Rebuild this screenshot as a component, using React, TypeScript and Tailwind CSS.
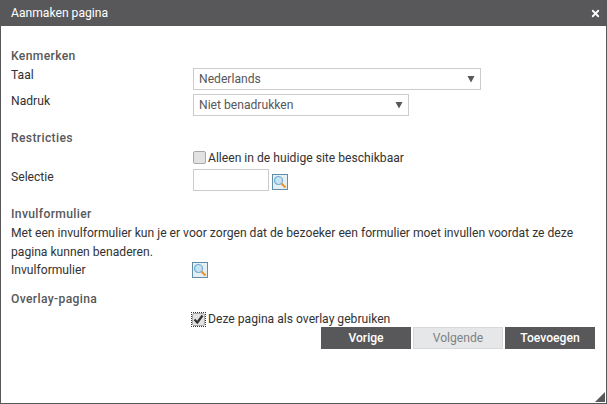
import { X } from "lucide-react";

function SearchIcon() {
  return (
    <span className="flex h-[16px] w-[16px] shrink-0 items-center justify-center border border-[#5f8fa8] bg-[#e4eff6]">
      <svg width="14" height="14" viewBox="0 0 14 14">
        <line x1="8" y1="8" x2="12.5" y2="12.5" stroke="#e8962e" strokeWidth="2.2" />
        <circle cx="5.5" cy="5.5" r="4" fill="#c4e4f5" stroke="#7fa8c4" strokeWidth="1.2" />
      </svg>
    </span>
  );
}

function Select({ value, width }: { value: string; width: string }) {
  return (
    <div className={`flex h-[22px] items-center justify-between border border-[#cccccc] bg-white px-[5px] text-[#58585a] ${width}`}>
      <span className="pt-[1px]">{value}</span>
      <svg width="8" height="8" viewBox="0 0 8 8">
        <path d="M0.5 1h7L4 7.5z" fill="#58585a" />
      </svg>
    </div>
  );
}

function Checkbox({ checked }: { checked?: boolean }) {
  return (
    <span className="flex h-[13px] w-[13px] shrink-0 items-center justify-center rounded-[2px] border border-[#a8a8a8] bg-[#e2e2e2]">
      {checked && (
        <svg width="11" height="11" viewBox="0 0 11 11">
          <path d="M1.5 5.5l2.8 3L9.5 1.5" fill="none" stroke="#333333" strokeWidth="2.2" />
        </svg>
      )}
    </span>
  );
}

function Heading({ children, className }: { children: string; className: string }) {
  return <h2 className={`h-[19px] font-medium tracking-[0.35px] text-[#58585a] ${className}`}>{children}</h2>;
}

export default function App() {
  return (
    <div
      className="flex h-[404px] w-[607px] flex-col overflow-hidden border-x border-b border-[#58585a] bg-white text-[12.13px] leading-[19px] text-[#333333]"
      style={{ fontFamily: "Roboto, sans-serif" }}
    >
      <div className="flex h-[26px] shrink-0 items-center justify-between bg-[#58585a] pl-[10px] pr-[5px] text-white">
        <span className="pt-[1px]">Aanmaken pagina</span>
        <X size={11} strokeWidth={4} />
      </div>

      <div className="relative flex-1 pl-[10px] pr-[11px] pt-[21px]">
        <Heading className="">Kenmerken</Heading>
        <div className="flex h-[23px]">
          <span className="w-[182px] shrink-0">Taal</span>
          <div className="mt-[2px]"><Select value="Nederlands" width="w-[288px]" /></div>
        </div>
        <div className="mt-[3px] flex h-[22px]">
          <span className="w-[182px] shrink-0">Nadruk</span>
          <div className="mt-[2px]"><Select value="Niet benadrukken" width="w-[216px]" /></div>
        </div>

        <Heading className="mt-[15px]">Restricties</Heading>
        <div className="mt-[1px] flex h-[19px] items-start gap-[2px] pl-[182px]">
          <span className="mt-[2px]"><Checkbox /></span>
          <span>Alleen in de huidige site beschikbaar</span>
        </div>
        <div className="mt-[1px] flex h-[22px]">
          <span className="-mt-[1px] w-[182px] shrink-0">Selectie</span>
          <div className="h-[22px] w-[76px] border border-[#cccccc]" />
          <div className="ml-[3px] mt-[5px]">
            <SearchIcon />
          </div>
        </div>

        <Heading className="mt-[14px]">Invulformulier</Heading>
        <p className="w-[575px]">
          Met een invulformulier kun je er voor zorgen dat de bezoeker een formulier moet invullen voordat ze deze
          pagina kunnen benaderen.
        </p>
        <div className="flex h-[19px]">
          <span className="-mt-[1px] w-[181px] shrink-0">Invulformulier</span>
          <SearchIcon />
        </div>

        <Heading className="mt-[9px]">Overlay-pagina</Heading>
        <div className="mt-[1px] flex h-[19px] items-center gap-[3px] pl-[181px]">
          <span className="outline-1 outline-dotted outline-[#333333]">
            <Checkbox checked />
          </span>
          <span>Deze pagina als overlay gebruiken</span>
        </div>

        <div className="-mt-[2px] flex justify-end gap-[2px]">
          <button className="h-[22px] w-[90px] bg-[#58585a] font-medium text-white">Vorige</button>
          <button className="h-[22px] w-[90px] border border-[#d8d8d8] bg-[#e6e7e8] text-[#808285]">Volgende</button>
          <button className="h-[22px] w-[90px] bg-[#58585a] font-medium text-white">Toevoegen</button>
        </div>

        <svg className="absolute bottom-0 right-0" width="12" height="12" viewBox="0 0 12 12">
          <path d="M11 1v10H1z" fill="#58585a" />
        </svg>
      </div>
    </div>
  );
}
